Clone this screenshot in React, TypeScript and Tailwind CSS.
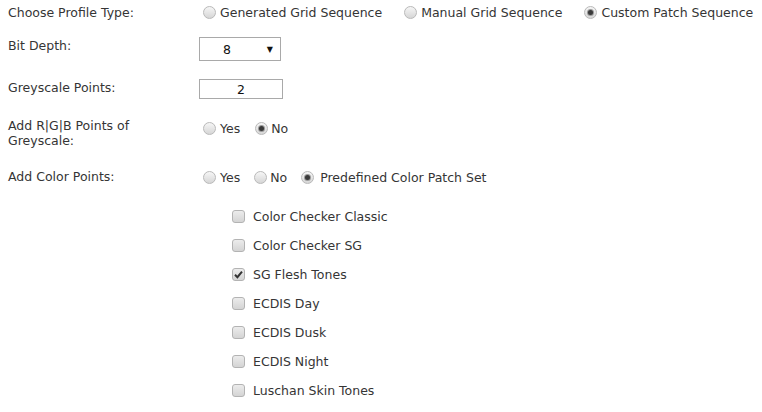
import React from "react";

const Radio = ({ checked = false }: { checked?: boolean }) => (
  <span className="relative inline-block h-[13px] w-[13px] shrink-0 rounded-full border border-[#b9b9b9] bg-linear-to-b from-[#f6f6f6] to-[#d6d6d6]">
    {checked && (
      <span className="absolute left-[3px] top-[3px] h-[5px] w-[5px] rounded-full bg-[#3a3a3a] shadow-[0_0_0_1px_#9a9a9a]" />
    )}
  </span>
);

const Check = ({ checked = false }: { checked?: boolean }) => (
  <span className="relative inline-block h-[13px] w-[13px] shrink-0 rounded-[3px] border border-[#b3b3b3] bg-linear-to-b from-[#ececec] to-[#d4d4d4]">
    {checked && (
      <svg viewBox="0 0 13 13" className="absolute left-[-1px] top-[-1px] h-[13px] w-[13px]">
        <path d="M3 6.8 L5.4 9.2 L10 3.6" fill="none" stroke="#333" strokeWidth="2" />
      </svg>
    )}
  </span>
);

const Option = ({ label, checked, gap = "gap-1" }: { label: string; checked?: boolean; gap?: string }) => (
  <label className={`flex items-center ${gap}`}>
    <Radio checked={checked} />
    <span>{label}</span>
  </label>
);

const patchSets = [
  { name: "Color Checker Classic", checked: false },
  { name: "Color Checker SG", checked: false },
  { name: "SG Flesh Tones", checked: true },
  { name: "ECDIS Day", checked: false },
  { name: "ECDIS Dusk", checked: false },
  { name: "ECDIS Night", checked: false },
  { name: "Luschan Skin Tones", checked: false },
];

export default function App() {
  return (
    <div
      className="h-[412px] w-[762px] overflow-hidden bg-white pl-2 text-[12.5px] leading-[15px] text-[#353535]"
      style={{ fontFamily: '"DejaVu Sans", Verdana, sans-serif' }}
    >
      {/* profile type */}
      <div className="flex h-6 items-center">
        <div className="w-[191px]">Choose Profile Type:</div>
        <div className="flex items-center gap-[22px] pl-1">
          <Option label="Generated Grid Sequence" />
          <Option label="Manual Grid Sequence" />
          <Option label="Custom Patch Sequence" checked />
        </div>
      </div>

      {/* bit depth */}
      <div className="mt-[13px] flex items-start">
        <div className="w-[191px] pt-[1px]">Bit Depth:</div>
        <div className="flex h-6 w-[82px] items-center border border-[#a9a9a9] bg-white text-[#111]">
          <span className="ml-[23px]">8</span>
          <span className="ml-auto pr-[7px] text-[8px]">▼</span>
        </div>
      </div>

      {/* greyscale points */}
      <div className="mt-[18px] flex items-start">
        <div className="w-[191px] pt-[1px]">Greyscale Points:</div>
        <input
          readOnly
          value="2"
          className="h-5 w-[84px] border border-[#a9a9a9] bg-white text-center text-[12.5px] text-[#111] outline-none"
        />
      </div>

      {/* rgb points */}
      <div className="mt-[19px] flex items-start">
        <div className="w-[160px]">Add R|G|B Points of Greyscale:</div>
        <div className="ml-[31px] flex items-center gap-[15px] pl-1 pt-[3px]">
          <Option label="Yes" />
          <Option label="No" checked gap="gap-[3px]" />
        </div>
      </div>

      {/* color points */}
      <div className="mt-[21px] flex items-start">
        <div className="w-[191px]">Add Color Points:</div>
        <div className="flex items-center gap-[14px] pl-1 pt-[1px]">
          <Option label="Yes" />
          <Option label="No" gap="gap-[3px]" />
          <Option label="Predefined Color Patch Set" checked gap="gap-[6px]" />
        </div>
      </div>

      {/* predefined sets */}
      <div className="mt-[17px] flex flex-col pl-[224px]">
        {patchSets.map((set) => (
          <label key={set.name} className="flex h-[29px] items-center gap-2">
            <Check checked={set.checked} />
            <span>{set.name}</span>
          </label>
        ))}
      </div>
    </div>
  );
}
